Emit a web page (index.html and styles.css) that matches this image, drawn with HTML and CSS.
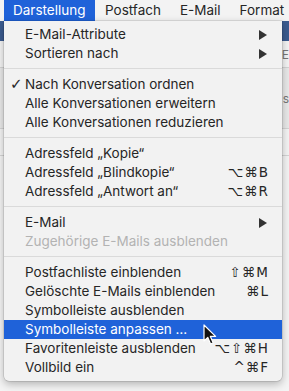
FILE: index.html
```html
<!DOCTYPE html>
<html lang="de">

<head>
    <meta charset="UTF-8">
    <meta name="viewport" content="width=device-width, initial-scale=1.0">
    <title>Darstellung</title>
    <link rel="stylesheet" href="styles.css">
</head>

<body>
    <div class="menubar">
        <div class="title active">Darstellung</div>
        <div class="title">Postfach</div>
        <div class="title">E-Mail</div>
        <div class="title">Format</div>
    </div>

    <div class="window">
        <div class="toolbar"></div>
        <div class="row"><span class="peek">E</span></div>
        <div class="row tall"><span class="peek">s</span></div>
        <div class="row"></div>
    </div>

    <div class="menu">
        <div class="item">E-Mail-Attribute<span class="arrow"></span></div>
        <div class="item">Sortieren nach<span class="arrow"></span></div>
        <div class="sep"></div>
        <div class="item"><span class="check">✓</span>Nach Konversation ordnen</div>
        <div class="item">Alle Konversationen erweitern</div>
        <div class="item">Alle Konversationen reduzieren</div>
        <div class="sep"></div>
        <div class="item">Adressfeld „Kopie“</div>
        <div class="item">Adressfeld „Blindkopie“<span class="keys">⌥⌘B</span></div>
        <div class="item">Adressfeld „Antwort an“<span class="keys">⌥⌘R</span></div>
        <div class="sep"></div>
        <div class="item">E-Mail<span class="arrow"></span></div>
        <div class="item disabled">Zugehörige E-Mails ausblenden</div>
        <div class="sep"></div>
        <div class="item">Postfachliste einblenden<span class="keys">⇧⌘M</span></div>
        <div class="item">Gelöschte E-Mails einblenden<span class="keys">⌘L</span></div>
        <div class="item">Symbolleiste ausblenden</div>
        <div class="item selected">Symbolleiste anpassen …</div>
        <div class="item">Favoritenleiste ausblenden<span class="keys">⌥⇧⌘H</span></div>
        <div class="item">Vollbild ein<span class="keys">^⌘F</span></div>
    </div>

    <svg class="cursor" width="14" height="22" viewBox="0 0 14 22">
        <path d="M1 1 L1 17 L4.8 13.4 L7.6 20 L10.2 18.9 L7.4 12.4 L12.6 12.4 Z" fill="#111" stroke="#fff" stroke-width="1.2" stroke-linejoin="round" />
    </svg>
</body>

</html>
```

FILE: styles.css
```css
body {
    margin: 0;
    width: 289px;
    height: 391px;
    overflow: hidden;
    position: relative;
    background-color: #ececec;
    font-family: "Inter", "Liberation Sans", sans-serif;
    color: #262626;
}

.menubar {
    height: 21px;
    display: flex;
    gap: 19px;
    background-color: #f3f3f3;
    font-size: 13.5px;
    line-height: 21px;
}

.title {
    flex-shrink: 0;
    white-space: nowrap;
}

.title.active {
    box-sizing: border-box;
    width: 91px;
    margin-left: 4px;
    margin-right: -9px;
    padding-left: 9px;
    background-color: #1f62d9;
    color: #fff;
}

.window {
    display: flex;
    flex-direction: column;
    height: 370px;
    background-color: #f4f4f4;
}

.toolbar {
    height: 20px;
    background-color: #3b5b8f;
}

.row {
    height: 26px;
    border-bottom: 1px solid #d4d4d4;
    display: flex;
    justify-content: flex-end;
    align-items: center;
}

.row.tall {
    height: 60px;
    background-color: #e9e9e9;
}

.peek {
    font-size: 12px;
    color: #777;
    margin-right: 0;
}

.menu {
    position: absolute;
    left: 4px;
    top: 21px;
    width: 278px;
    padding: 4px 0;
    background-color: #f2f2f2;
    border-radius: 0 0 5px 5px;
    box-shadow: 0 3px 9px rgba(0, 0, 0, 0.28), 0 0 0 0.5px rgba(0, 0, 0, 0.18);
    font-size: 13.5px;
}

.item {
    position: relative;
    height: 19px;
    line-height: 19px;
    padding: 0 14px 0 21px;
    display: flex;
    justify-content: space-between;
    align-items: center;
    white-space: nowrap;
}

.item.disabled {
    color: #b3b3b3;
}

.item.selected {
    background-color: #1f62d9;
    color: #fff;
}

.check {
    position: absolute;
    left: 6px;
    top: 0;
    font-family: "DejaVu Sans", sans-serif;
    font-size: 15px;
    font-weight: bold;
}

.keys {
    font-family: "DejaVu Sans", sans-serif;
    font-size: 13.5px;
    letter-spacing: 1px;
    margin-right: -1px;
}

.arrow {
    width: 0;
    height: 0;
    margin-right: 1px;
    border-top: 5px solid transparent;
    border-bottom: 5px solid transparent;
    border-left: 8px solid #333;
}

.sep {
    height: 1px;
    margin: 5px 0 6px;
    background-color: #dadada;
}

.cursor {
    position: absolute;
    left: 203px;
    top: 324px;
}
```
